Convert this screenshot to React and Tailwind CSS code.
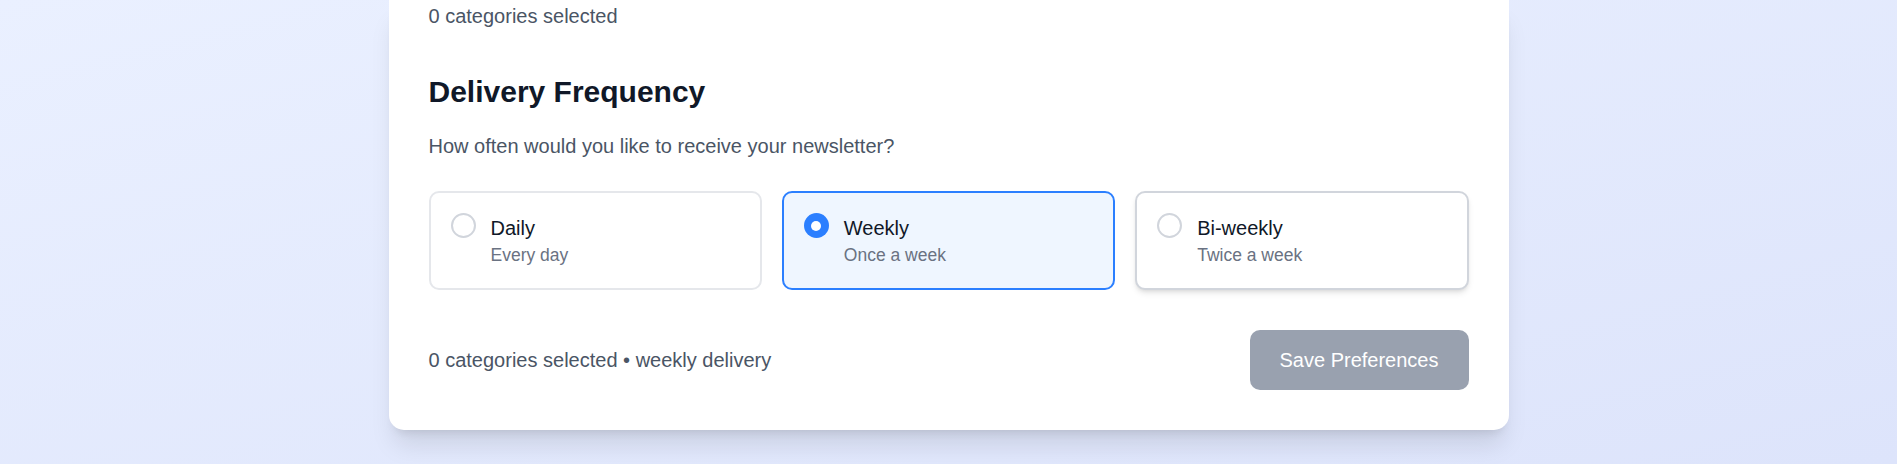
import { useState } from 'react';

const options = [
  { id: 'daily', label: 'Daily', desc: 'Every day' },
  { id: 'weekly', label: 'Weekly', desc: 'Once a week' },
  { id: 'biweekly', label: 'Bi-weekly', desc: 'Twice a week' },
];

function App() {
  const [frequency, setFrequency] = useState('weekly');
  const selected = [];

  return (
    <div className="h-[464px] overflow-hidden bg-gradient-to-br from-[#eaf0ff] to-[#dde4fb] flex justify-center font-['Liberation_Sans',Arial,sans-serif]">
      <div className="w-[1120px] h-[430px] bg-white rounded-b-[15px] shadow-xl px-10 pt-[2px] pb-10 flex flex-col">
        <p className="text-[20px] leading-[28px] text-gray-600">{selected.length} categories selected</p>

        <h2 className="mt-[42px] text-[30px] leading-[40px] font-bold text-gray-900">Delivery Frequency</h2>
        <p className="mt-[19px] text-[20px] leading-[30px] text-gray-600">How often would you like to receive your newsletter?</p>

        <div className="mt-[30px] grid grid-cols-3 gap-5">
          {options.map((opt) => {
            const active = frequency === opt.id;
            const hovered = opt.id === 'biweekly';
            return (
              <button
                key={opt.id}
                onClick={() => setFrequency(opt.id)}
                className={
                  active
                    ? 'flex items-start gap-[15px] p-5 rounded-[10px] border-2 border-blue-500 bg-blue-50 text-left'
                    : hovered
                    ? 'flex items-start gap-[15px] p-5 rounded-[10px] border-2 border-gray-300 bg-white shadow-md text-left'
                    : 'flex items-start gap-[15px] p-5 rounded-[10px] border-2 border-gray-200 bg-white text-left'
                }
              >
                {active ? (
                  <span className="w-[25px] h-[25px] shrink-0 rounded-full bg-blue-500 flex items-center justify-center">
                    <span className="w-[10px] h-[10px] rounded-full bg-white" />
                  </span>
                ) : (
                  <span className="w-[25px] h-[25px] shrink-0 rounded-full border-2 border-gray-300 bg-white" />
                )}
                <span className="flex flex-col">
                  <span className="text-[20px] leading-[30px] font-medium text-gray-900">{opt.label}</span>
                  <span className="text-[17.5px] leading-[25px] text-gray-500">{opt.desc}</span>
                </span>
              </button>
            );
          })}
        </div>

        <div className="mt-10 flex items-center justify-between">
          <p className="text-[20px] leading-[30px] text-gray-600">
            {selected.length} categories selected • {frequency} delivery
          </p>
          <button className="h-[60px] px-[30px] rounded-[10px] bg-gray-400 text-white text-[20px] font-medium">
            Save Preferences
          </button>
        </div>
      </div>
    </div>
  );
}

export default App;
